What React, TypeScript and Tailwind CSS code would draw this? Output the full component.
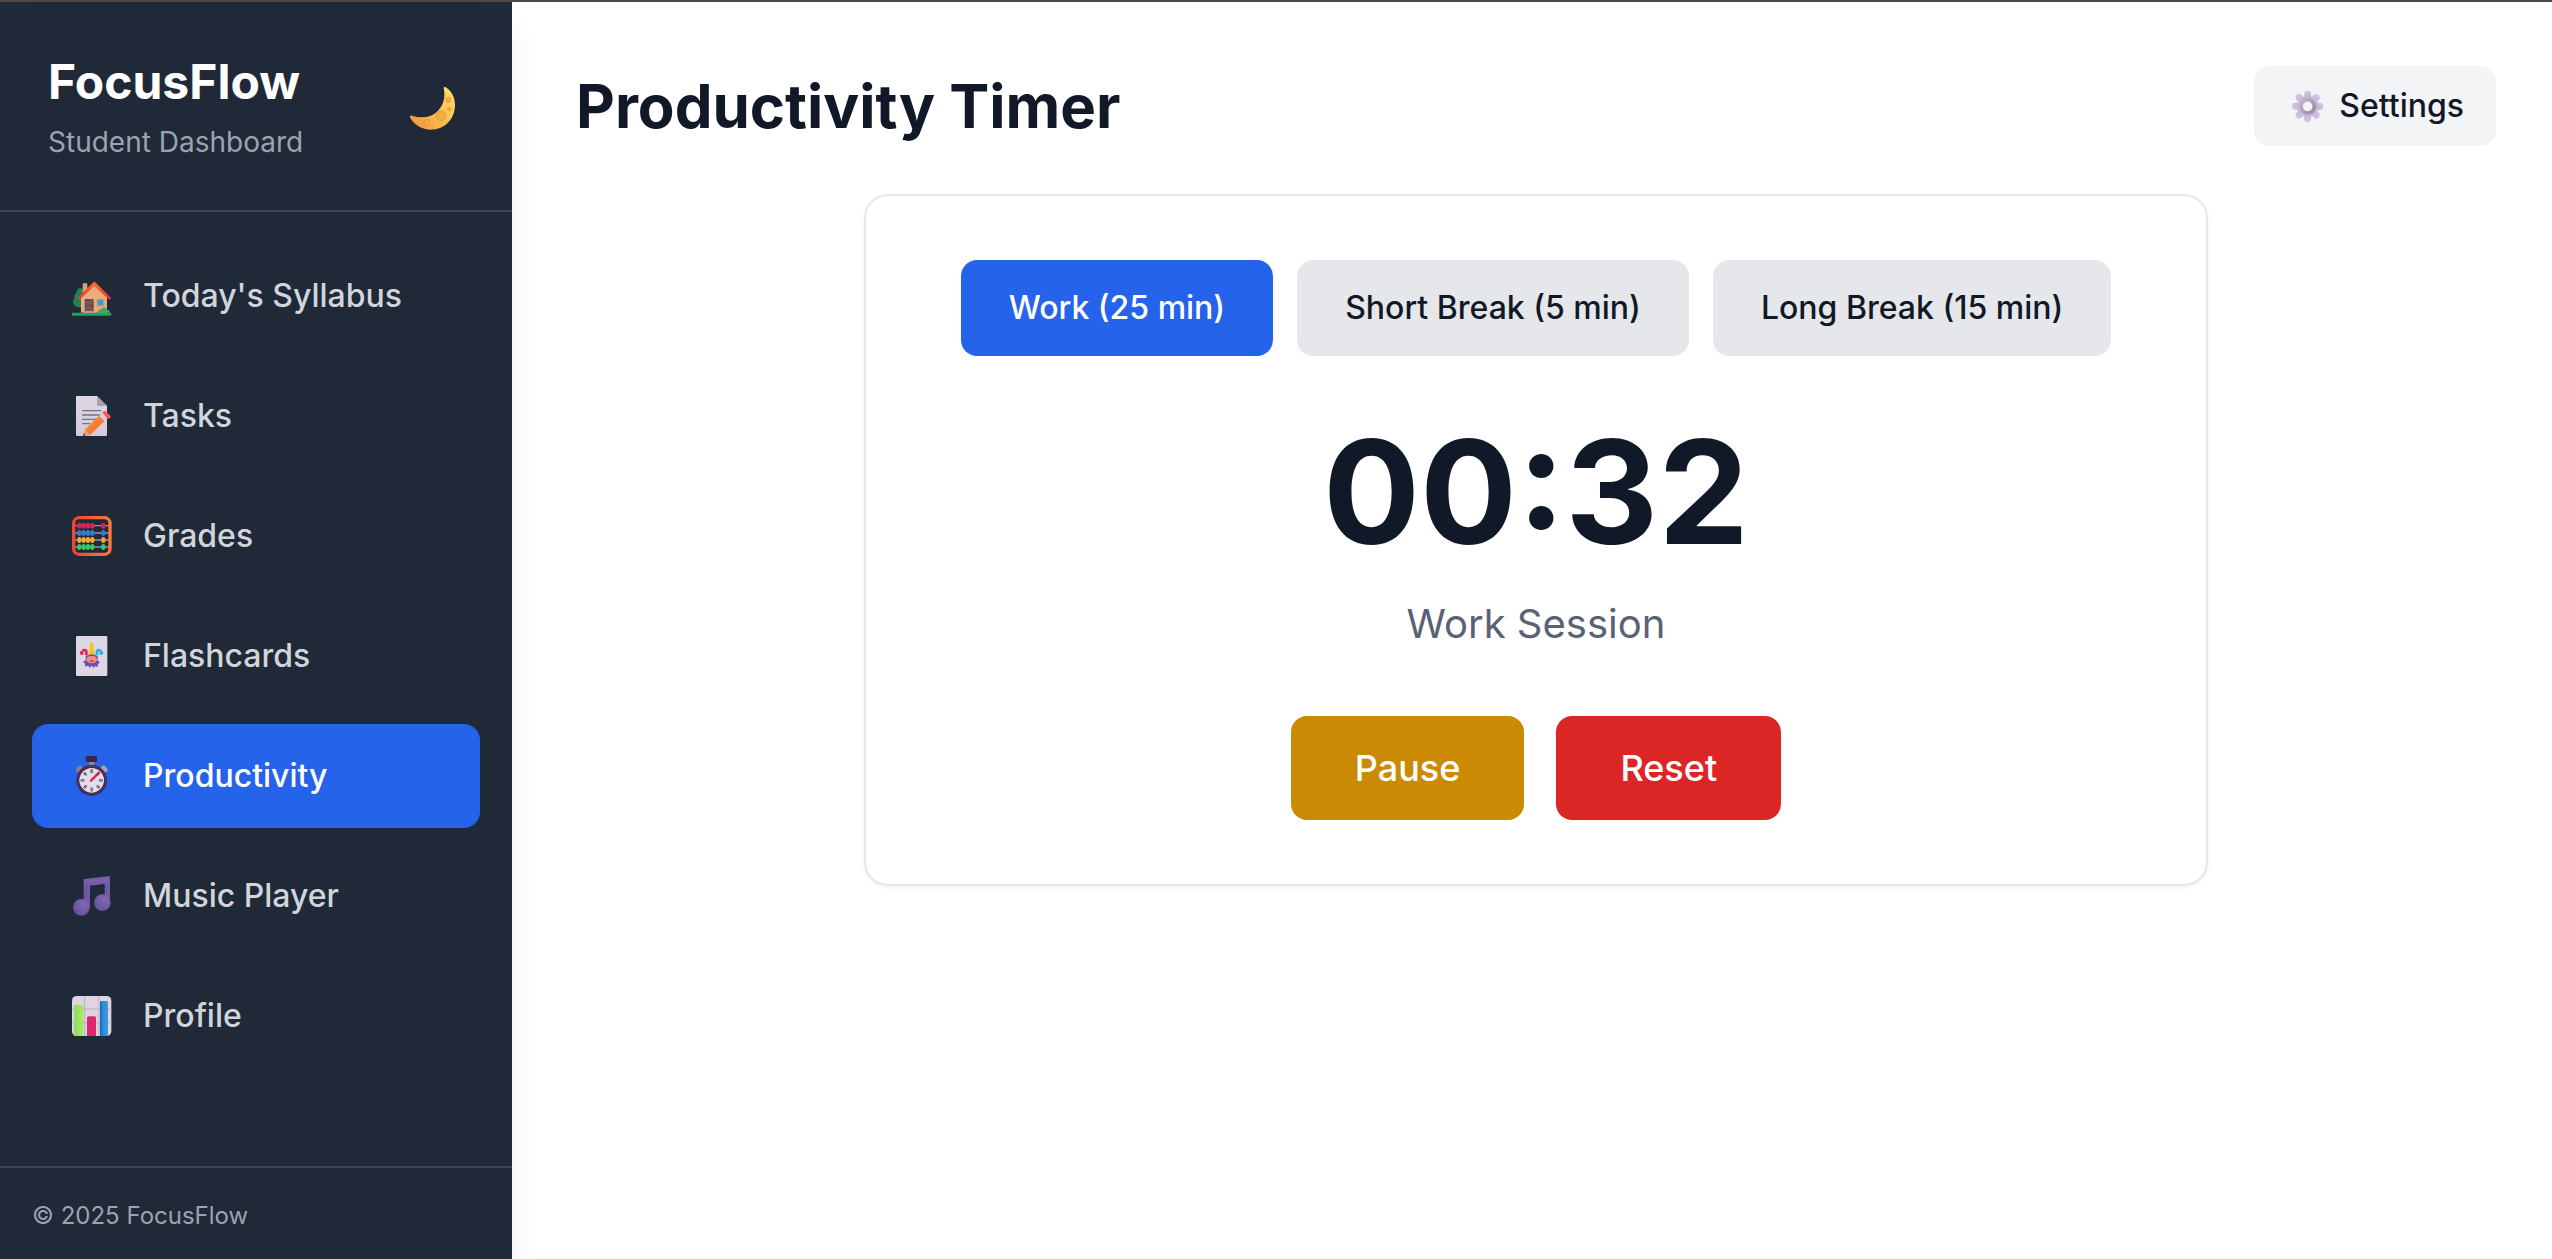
import { useState, type ReactNode } from "react";

/* Icônes du menu : toutes dessinées dans le même repère */
function NavIcon({ children }: { children: ReactNode }) {
  return (
    <svg className="h-10 w-10" viewBox="66 48 120 120" aria-hidden="true">
      {children}
    </svg>
  );
}

function HouseIcon() {
  return (
    <NavIcon>
      <defs>
        <linearGradient id="wall" x1="0" y1="0" x2="1" y2="1">
          <stop offset="0" stopColor="#e9b184" />
          <stop offset="1" stopColor="#eba878" />
        </linearGradient>
        <linearGradient id="roof" x1="0" y1="0" x2="1" y2="0">
          <stop offset="0" stopColor="#d93a2c" />
          <stop offset="0.5" stopColor="#ff6a2e" />
          <stop offset="1" stopColor="#d62f35" />
        </linearGradient>
      </defs>
      <path d="M92 84c-9 0-13 8-13 15-6 4-7 10-5 15-7 7-6 18 2 24 8 6 20 6 26 2V90z" fill="#1f8354" />
      <rect x="98" y="70" width="14" height="28" rx="2" fill="#dca17b" />
      <path d="M93 158v-54l39-34 39 36v52z" fill="url(#wall)" />
      <path d="M82 113l48-46q3-3 6 0l48 47-5 6-46-41-45 40z" fill="url(#roof)" />
      <rect x="104" y="117" width="27" height="40" rx="2" fill="#744b4b" />
      <path d="M109 122h7v12h-7zM119 122h7v12h-7zM109 139h7v13h-7zM119 139h7v13h-7z" fill="#805656" />
      <circle cx="126" cy="137" r="2" fill="#3f2c37" />
      <rect x="139" y="116" width="24" height="24" rx="2" fill="#f59b45" />
      <rect x="142" y="119" width="18" height="17" fill="#2d9df4" />
      <path d="M143 158c1-8 7-10 10-10 4-8 17-7 19 2 5 0 8 4 8 8z" fill="#43a866" />
      <rect x="66" y="158" width="118" height="9" rx="3" fill="#20a45c" />
      <path d="M104 153h30l4 6h-36z" fill="#b69b91" />
    </NavIcon>
  );
}

function MemoIcon() {
  return (
    <NavIcon>
      <defs>
        <linearGradient id="sheet" x1="0" y1="0" x2="0" y2="1">
          <stop offset="0" stopColor="#ded8e3" />
          <stop offset="1" stopColor="#d5c9df" />
        </linearGradient>
        <linearGradient id="pen" x1="0" y1="0" x2="1" y2="1">
          <stop offset="0" stopColor="#ffa32f" />
          <stop offset="1" stopColor="#ec602b" />
        </linearGradient>
      </defs>
      <path d="M82 48h59l30 30v86q0 4-4 4H82q-4 0-4-4V52q0-4 4-4z" fill="url(#sheet)" />
      <path d="M141 48l30 30h-26q-4 0-4-4z" fill="#aaa0b0" />
      <path d="M96 92h58M96 105h58M96 118h45M96 131h25" stroke="#77767f" strokeWidth="4" />
      <path d="M99 168l5-19 16 16z" fill="#dfa18b" />
      <path d="M99 168l2-8 6 6z" fill="#5d3f50" />
      <path d="M104 149l43-42 17 16-44 42z" fill="url(#pen)" />
      <path d="M147 107l10-9 17 16-10 9z" fill="#d8cbdc" />
      <path d="M157 98l4-4q3-2 6 0l14 13q3 3 0 6l-4 3q-3 1-5-1z" fill="#fa5754" />
    </NavIcon>
  );
}

const abacusRows = [
  { y: 77, color: "#dc2355" },
  { y: 99, color: "#2f7cd3" },
  { y: 120, color: "#f5a82d" },
  { y: 141, color: "#35ca68" },
];

function AbacusIcon() {
  return (
    <NavIcon>
      <defs>
        <linearGradient id="frame" x1="0" y1="0" x2="1" y2="0">
          <stop offset="0" stopColor="#f0442c" />
          <stop offset="1" stopColor="#ff7839" />
        </linearGradient>
      </defs>
      {abacusRows.map((row) => (
        <g key={row.y}>
          <path d={`M74 ${row.y}h104`} stroke="#a58bb0" strokeWidth="4" />
          {[88, 101, 114, 127, 160].map((x) => (
            <ellipse key={x} cx={x} cy={row.y} rx="6.5" ry="9" fill={row.color} />
          ))}
        </g>
      ))}
      <rect x="71" y="53" width="109" height="110" rx="17" fill="none" stroke="url(#frame)" strokeWidth="10" />
    </NavIcon>
  );
}

function JokerIcon() {
  return (
    <NavIcon>
      <rect x="78" y="48" width="94" height="120" rx="4" fill="#ddd6e3" />
      <path d="M109 106V93q-5-5-12 0" fill="none" stroke="#e5285b" strokeWidth="8" />
      <circle cx="95" cy="99" r="6" fill="#e5285b" />
      <path d="M141 106V93q5-5 12 0" fill="none" stroke="#22b5e5" strokeWidth="8" />
      <circle cx="154" cy="99" r="6" fill="#22b5e5" />
      <path d="M115 106l7-30h6l7 30z" fill="#f5c51f" />
      <circle cx="125" cy="74" r="6" fill="#f8c70b" />
      <path d="M107 109q18-13 36 0l0 13 7 4-6 6-1 9-9-3-3 6-6-7-6 7-4-7-9 3-1-9-6-6 8-4z" fill="#6951ad" />
      <path d="M109 121q-1-13 16-13t16 13q-5 9-16 9t-16-9z" fill="#ef9284" />
      <ellipse cx="125" cy="123" rx="6" ry="3" fill="#e1304f" />
    </NavIcon>
  );
}

function StopwatchIcon() {
  return (
    <NavIcon>
      <path d="M80 84l10-9 10 8-14 15-8-5z" fill="#867f91" />
      <path d="M171 84l-10-9-10 8 14 15 8-5z" fill="#aaa5b3" />
      <path d="M117 64h15v13h-15z" fill="#8d839b" />
      <rect x="107" y="48" width="34" height="18" rx="5" fill="#3c2044" />
      <path d="M114 50v14M123 50v14M132 50v14" stroke="#532d58" strokeWidth="2" />
      <circle cx="125" cy="121" r="46" fill="#402247" />
      <circle cx="125" cy="121" r="42" fill="none" stroke="#67506f" strokeWidth="2" />
      <circle cx="125" cy="121" r="37" fill="#e3dce8" />
      {[0, 45, 90, 135, 180, 225, 270, 315].map((angle) => (
        <g key={angle} transform={`rotate(${angle} 125 121)`}>
          <path d="M125 88v11" stroke="#655770" strokeWidth="7" />
          <path d="M125 90v7" stroke="#aaa1b1" strokeWidth="2" />
        </g>
      ))}
      <path d="M123 122l24-24" stroke="#dc2353" strokeWidth="7" strokeLinecap="round" />
    </NavIcon>
  );
}

function MusicIcon() {
  return (
    <NavIcon>
      <defs>
        <radialGradient id="note" cx="0.65" cy="0.3" r="0.7">
          <stop offset="0" stopColor="#8067b5" />
          <stop offset="1" stopColor="#67549a" />
        </radialGradient>
      </defs>
      <path d="M101 57l79-9v79h-16V72l-44 5v66h-19z" fill="#6f59a3" />
      <path d="M102 59l76-9v17l-76 8z" fill="#7560a9" />
      <circle cx="94" cy="142" r="25" fill="url(#note)" />
      <circle cx="157" cy="128" r="25" fill="url(#note)" />
    </NavIcon>
  );
}

function ChartIcon() {
  return (
    <NavIcon>
      <defs>
        <linearGradient id="green" x1="0" y1="0" x2="1" y2="0">
          <stop offset="0" stopColor="#91d95c" />
          <stop offset="1" stopColor="#a7ec66" />
        </linearGradient>
        <linearGradient id="blue" x1="0" y1="0" x2="1" y2="0">
          <stop offset="0" stopColor="#1765b4" />
          <stop offset="0.4" stopColor="#2f8edb" />
          <stop offset="1" stopColor="#3b9be6" />
        </linearGradient>
      </defs>
      <rect x="66" y="48" width="118" height="120" rx="14" fill="#ddd6e2" />
      <path d="M104 48v120M147 48v120M66 87h118M66 128h118" stroke="#b9afc0" strokeWidth="3" />
      <path d="M72 168V79q0-4 4-4h19q5 0 5 5v88z" fill="url(#green)" />
      <path d="M111 168v-54q0-5 5-5h17q5 0 5 5v54z" fill="#dc2869" />
      <path d="M150 168V67q0-4 4-4h16q4 0 4 4v101z" fill="url(#blue)" />
    </NavIcon>
  );
}

function MoonIcon() {
  return (
    <svg className="h-[45px] w-12" viewBox="84 78 144 135" aria-hidden="true">
      <defs>
        <linearGradient id="moon" x1="1" y1="0" x2="0" y2="1">
          <stop offset="0" stopColor="#ffe16b" />
          <stop offset="0.55" stopColor="#ffbd51" />
          <stop offset="1" stopColor="#f48a3c" />
        </linearGradient>
      </defs>
      <path
        d="M191 84c0-4 4-4 6-2 18 11 28 31 28 53 0 42-31 74-72 74-27 0-50-14-62-35-3-5 0-9 5-7 29 9 57 5 75-12 20-18 26-43 20-71z"
        fill="url(#moon)"
      />
      <g fill="#f6ad44" stroke="#d99239" strokeWidth="2">
        <circle cx="183" cy="168" r="15" />
        <circle cx="205" cy="120" r="8" />
        <circle cx="208" cy="147" r="5" />
        <circle cx="140" cy="187" r="9" />
      </g>
    </svg>
  );
}

function GearIcon() {
  return (
    <svg className="h-[33px] w-[33px]" viewBox="153 117 99 99" aria-hidden="true">
      <defs>
        <linearGradient id="gear" x1="0" y1="0" x2="1" y2="1">
          <stop offset="0" stopColor="#d5c9df" />
          <stop offset="1" stopColor="#c6b2da" />
        </linearGradient>
        <linearGradient id="ring" x1="0" y1="0" x2="1" y2="1">
          <stop offset="0" stopColor="#c1b5cb" />
          <stop offset="1" stopColor="#9888a4" />
        </linearGradient>
      </defs>
      {[0, 45, 90, 135, 180, 225, 270, 315].map((angle) => (
        <path
          key={angle}
          d="M191 142l2-16q1-7 10-7t10 7l2 16z"
          fill="url(#gear)"
          transform={`rotate(${angle} 203 166)`}
        />
      ))}
      <circle cx="203" cy="166" r="31" fill="#c8b9d6" />
      <circle cx="203" cy="166" r="20" fill="#f3f4f6" stroke="url(#ring)" strokeWidth="11" />
    </svg>
  );
}

const navItems = [
  { label: "Today's Syllabus", icon: <HouseIcon /> },
  { label: "Tasks", icon: <MemoIcon /> },
  { label: "Grades", icon: <AbacusIcon /> },
  { label: "Flashcards", icon: <JokerIcon /> },
  { label: "Productivity", icon: <StopwatchIcon /> },
  { label: "Music Player", icon: <MusicIcon /> },
  { label: "Profile", icon: <ChartIcon /> },
];

const modes = ["Work (25 min)", "Short Break (5 min)", "Long Break (15 min)"];

function Sidebar() {
  const [active, setActive] = useState("Productivity");

  return (
    <aside className="flex w-[512px] shrink-0 flex-col bg-[#1f2937] shadow-[0_20px_30px_-6px_rgba(0,0,0,0.1)]">
      <div className="flex items-center justify-between border-b-2 border-[#3b4554] p-12">
        <div>
          <h1 className="text-5xl leading-16 font-bold text-white">FocusFlow</h1>
          <p className="mt-2 text-[28px] leading-10 text-[#9ca3af]">Student Dashboard</p>
        </div>
        <button type="button" aria-label="Toggle dark mode" className="px-2 pt-1">
          <MoonIcon />
        </button>
      </div>

      <nav className="flex flex-1 flex-col gap-4 p-8">
        {navItems.map((item) => (
          <button
            key={item.label}
            type="button"
            onClick={() => setActive(item.label)}
            className={`flex items-center gap-6 rounded-2xl px-8 py-6 text-[32px] leading-14 font-medium ${
              active === item.label ? "bg-[#2563eb] text-white" : "text-[#d1d5db]"
            }`}
          >
            <span className="flex w-[55px] justify-center">{item.icon}</span>
            {item.label}
          </button>
        ))}
      </nav>

      <footer className="border-t-2 border-[#3b4554] px-8 pt-8 pb-[27px] text-2xl leading-8 text-[#9ca3af]">
        © 2025 FocusFlow
      </footer>
    </aside>
  );
}

export default function App() {
  const [mode, setMode] = useState(modes[0]);

  return (
    <div className="flex min-h-screen border-t-2 border-[#4f4b49] bg-white font-['Inter',sans-serif] text-[#111827]">
      <Sidebar />

      <main className="flex-1 py-16 pr-14 pl-16">
        <header className="mb-12 flex items-center justify-between">
          <h2 className="text-6xl leading-[72px] font-bold">Productivity Timer</h2>
          <button
            type="button"
            className="flex items-center gap-2 rounded-2xl bg-[#f3f4f6] px-8 py-4 text-[32px] leading-12 font-medium"
          >
            <span className="w-[45px] pl-[5px]">
              <GearIcon />
            </span>
            Settings
          </button>
        </header>

        {/* Minuteur */}
        <section className="mx-auto max-w-[1344px] rounded-3xl border-2 border-[#e5e7eb] bg-white p-16 text-center shadow-[0_2px_4px_rgba(0,0,0,0.05)]">
          <div className="mb-16 flex justify-center gap-6">
            {modes.map((m) => (
              <button
                key={m}
                type="button"
                onClick={() => setMode(m)}
                className={`rounded-2xl px-12 py-6 text-[32px] leading-12 font-medium ${
                  mode === m ? "bg-[#2563eb] text-white" : "bg-[#e5e7eb]"
                }`}
              >
                {m}
              </button>
            ))}
          </div>

          <div className="mb-8 text-[144px] leading-none font-bold">00:32</div>
          <p className="mb-16 text-[40px] leading-14 text-[#586274]">Work Session</p>

          <div className="flex justify-center gap-8 text-4xl leading-14 font-medium text-white">
            <button type="button" className="rounded-2xl bg-[#ca8a04] px-16 py-6">
              Pause
            </button>
            <button type="button" className="rounded-2xl bg-[#dc2626] px-16 py-6">
              Reset
            </button>
          </div>
        </section>
      </main>
    </div>
  );
}
